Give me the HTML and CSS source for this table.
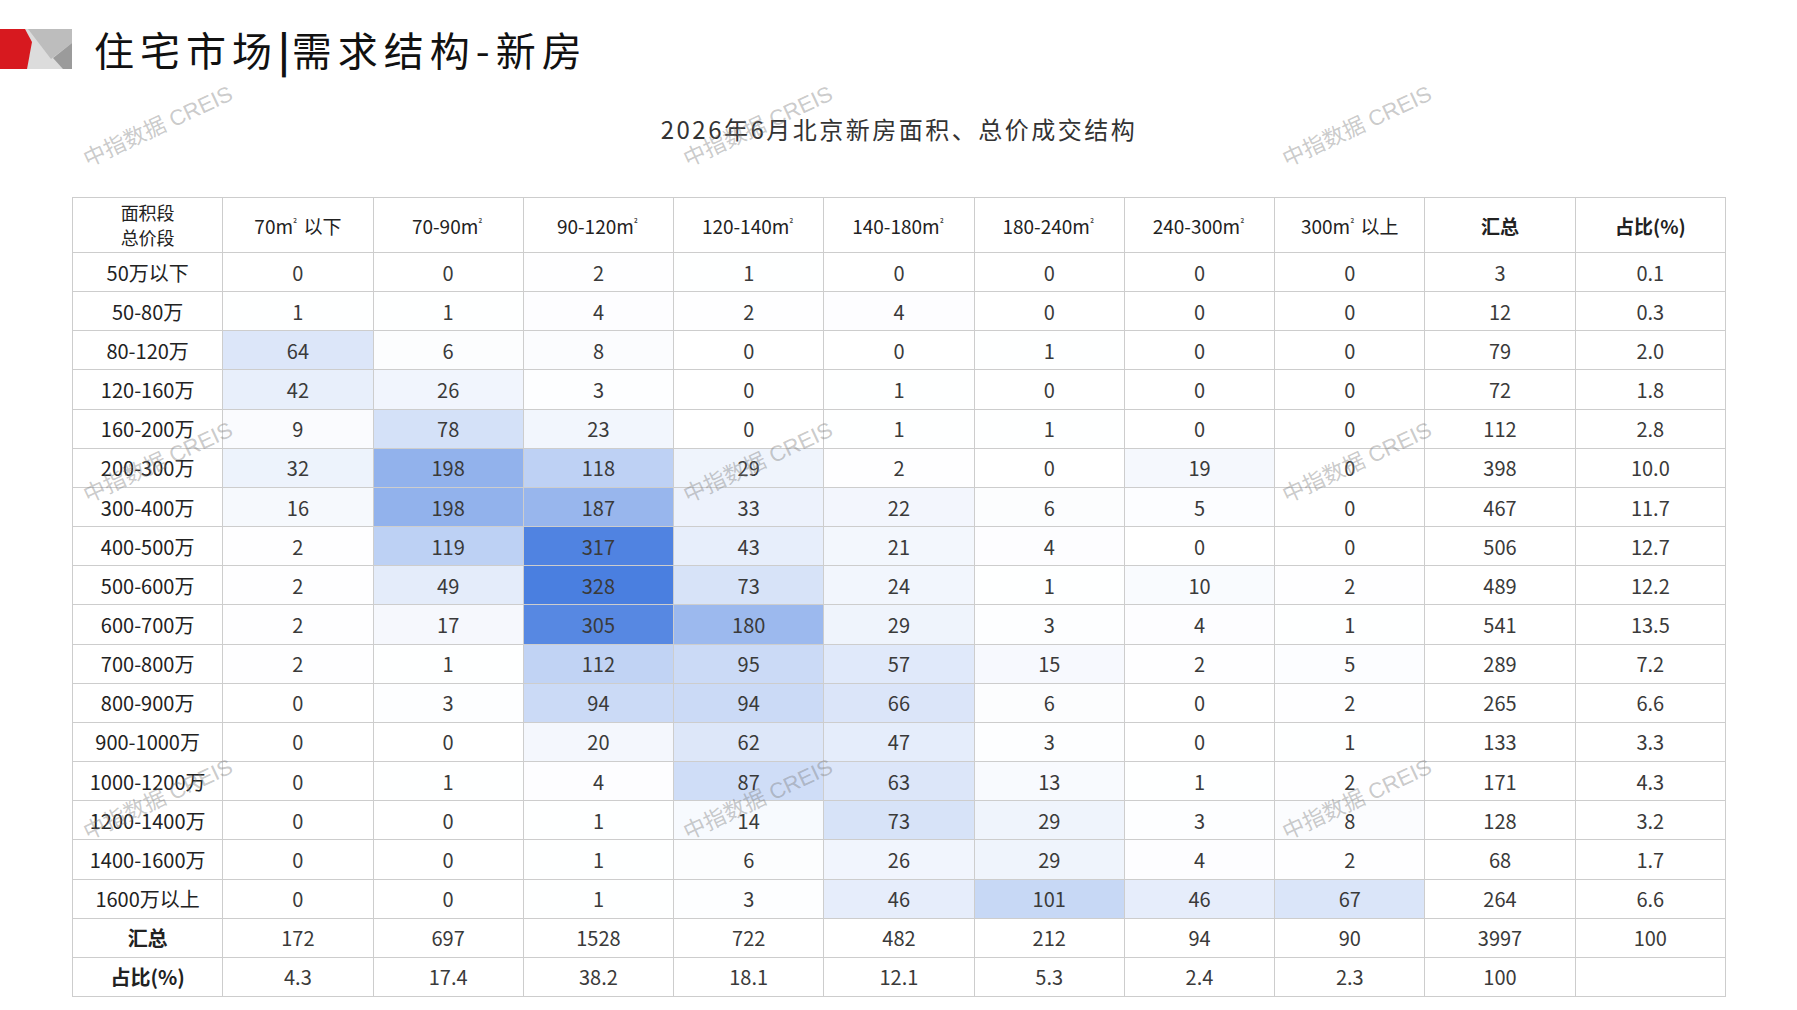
FILE: index.html
```html
<!DOCTYPE html>
<html lang="zh-CN">
<head>
<meta charset="utf-8">
<title>住宅市场|需求结构-新房</title>
<link rel="stylesheet" href="styles.css">
</head>
<body>
<div class="page">
  <header class="header">
    <svg class="logo" viewBox="0 0 72 40" xmlns="http://www.w3.org/2000/svg">
      <polygon points="22,0 72,0 72,40 20,40" fill="#dcdcdc"/>
      <polygon points="28,0 72,0 72,14 51,30" fill="#bdbdbd"/>
      <polygon points="72,14 53,29 63,40 72,40" fill="#9b9b9b"/>
      <polygon points="0,0 25,0 32,13 27,40 0,40" fill="#d7191f"/>
    </svg>
    <h1 class="title">住宅市场<span class="bar">|</span>需求结构-新房</h1>
  </header>

  <h2 class="subtitle">2026年6月北京新房面积、总价成交结构</h2>

  <table class="grid" id="grid">
    <thead>
      <tr>
        <th class="corner"><span class="cl">面积段</span><span class="cl">总价段</span></th>
        <th>70m<span class="sq">²</span> 以下</th>
        <th>70-90m<span class="sq">²</span></th>
        <th>90-120m<span class="sq">²</span></th>
        <th>120-140m<span class="sq">²</span></th>
        <th>140-180m<span class="sq">²</span></th>
        <th>180-240m<span class="sq">²</span></th>
        <th>240-300m<span class="sq">²</span></th>
        <th>300m<span class="sq">²</span> 以上</th>
        <th class="kai">汇总</th>
        <th class="kai">占比(%)</th>
      </tr>
    </thead>
    <tbody>
      <tr class="data"><td class="lbl">50万以下</td><td>0</td><td>0</td><td>2</td><td>1</td><td>0</td><td>0</td><td>0</td><td>0</td><td>3</td><td>0.1</td></tr>
      <tr class="data"><td class="lbl">50-80万</td><td>1</td><td>1</td><td>4</td><td>2</td><td>4</td><td>0</td><td>0</td><td>0</td><td>12</td><td>0.3</td></tr>
      <tr class="data"><td class="lbl">80-120万</td><td>64</td><td>6</td><td>8</td><td>0</td><td>0</td><td>1</td><td>0</td><td>0</td><td>79</td><td>2.0</td></tr>
      <tr class="data"><td class="lbl">120-160万</td><td>42</td><td>26</td><td>3</td><td>0</td><td>1</td><td>0</td><td>0</td><td>0</td><td>72</td><td>1.8</td></tr>
      <tr class="data"><td class="lbl">160-200万</td><td>9</td><td>78</td><td>23</td><td>0</td><td>1</td><td>1</td><td>0</td><td>0</td><td>112</td><td>2.8</td></tr>
      <tr class="data"><td class="lbl">200-300万</td><td>32</td><td>198</td><td>118</td><td>29</td><td>2</td><td>0</td><td>19</td><td>0</td><td>398</td><td>10.0</td></tr>
      <tr class="data"><td class="lbl">300-400万</td><td>16</td><td>198</td><td>187</td><td>33</td><td>22</td><td>6</td><td>5</td><td>0</td><td>467</td><td>11.7</td></tr>
      <tr class="data"><td class="lbl">400-500万</td><td>2</td><td>119</td><td>317</td><td>43</td><td>21</td><td>4</td><td>0</td><td>0</td><td>506</td><td>12.7</td></tr>
      <tr class="data"><td class="lbl">500-600万</td><td>2</td><td>49</td><td>328</td><td>73</td><td>24</td><td>1</td><td>10</td><td>2</td><td>489</td><td>12.2</td></tr>
      <tr class="data"><td class="lbl">600-700万</td><td>2</td><td>17</td><td>305</td><td>180</td><td>29</td><td>3</td><td>4</td><td>1</td><td>541</td><td>13.5</td></tr>
      <tr class="data"><td class="lbl">700-800万</td><td>2</td><td>1</td><td>112</td><td>95</td><td>57</td><td>15</td><td>2</td><td>5</td><td>289</td><td>7.2</td></tr>
      <tr class="data"><td class="lbl">800-900万</td><td>0</td><td>3</td><td>94</td><td>94</td><td>66</td><td>6</td><td>0</td><td>2</td><td>265</td><td>6.6</td></tr>
      <tr class="data"><td class="lbl">900-1000万</td><td>0</td><td>0</td><td>20</td><td>62</td><td>47</td><td>3</td><td>0</td><td>1</td><td>133</td><td>3.3</td></tr>
      <tr class="data"><td class="lbl">1000-1200万</td><td>0</td><td>1</td><td>4</td><td>87</td><td>63</td><td>13</td><td>1</td><td>2</td><td>171</td><td>4.3</td></tr>
      <tr class="data"><td class="lbl">1200-1400万</td><td>0</td><td>0</td><td>1</td><td>14</td><td>73</td><td>29</td><td>3</td><td>8</td><td>128</td><td>3.2</td></tr>
      <tr class="data"><td class="lbl">1400-1600万</td><td>0</td><td>0</td><td>1</td><td>6</td><td>26</td><td>29</td><td>4</td><td>2</td><td>68</td><td>1.7</td></tr>
      <tr class="data"><td class="lbl">1600万以上</td><td>0</td><td>0</td><td>1</td><td>3</td><td>46</td><td>101</td><td>46</td><td>67</td><td>264</td><td>6.6</td></tr>
      <tr class="total"><td class="lbl kai">汇总</td><td>172</td><td>697</td><td>1528</td><td>722</td><td>482</td><td>212</td><td>94</td><td>90</td><td>3997</td><td>100</td></tr>
      <tr class="total"><td class="lbl kai">占比(%)</td><td>4.3</td><td>17.4</td><td>38.2</td><td>18.1</td><td>12.1</td><td>5.3</td><td>2.4</td><td>2.3</td><td>100</td><td></td></tr>
    </tbody>
  </table>

  <div class="wm" style="left:157px;top:124px">中指数据 CREIS</div>
  <div class="wm" style="left:757px;top:124px">中指数据 CREIS</div>
  <div class="wm" style="left:1356px;top:124px">中指数据 CREIS</div>
  <div class="wm" style="left:157px;top:460px">中指数据 CREIS</div>
  <div class="wm" style="left:757px;top:460px">中指数据 CREIS</div>
  <div class="wm" style="left:1356px;top:460px">中指数据 CREIS</div>
  <div class="wm" style="left:157px;top:797px">中指数据 CREIS</div>
  <div class="wm" style="left:757px;top:797px">中指数据 CREIS</div>
  <div class="wm" style="left:1356px;top:797px">中指数据 CREIS</div>
</div>
<script src="script.js"></script>
</body>
</html>
```

FILE: styles.css
```css
* { box-sizing: border-box; }
html, body { margin: 0; padding: 0; background: #ffffff; }
body {
  font-family: "Noto Sans CJK SC", "Noto Sans", sans-serif;
  color: #333333;
}
.page {
  position: relative;
  width: 1797px;
  height: 1010px;
  overflow: hidden;
  background: #ffffff;
}
.header {
  display: flex;
  align-items: center;
  gap: 22px;
  padding-top: 29px;
  height: 69px;
}
.logo {
  width: 72px;
  height: 40px;
  flex: none;
  display: block;
}
.title {
  margin: 0;
  font-size: 40px;
  line-height: 40px;
  font-weight: 400;
  letter-spacing: 6px;
  color: #111111;
}
.title .bar {
  font-weight: 700;
  letter-spacing: 2px;
}
.subtitle {
  margin: 45px 0 0 72px;
  width: 1654px;
  text-align: center;
  font-size: 24px;
  line-height: 30px;
  font-weight: 400;
  letter-spacing: 2.5px;
  color: #333333;
}
.grid {
  margin: 53px 0 0 72px;
  width: 1654px;
  border-collapse: collapse;
  table-layout: fixed;
}
.grid th,
.grid td {
  border: 1px solid #cdcdcd;
  padding: 0;
  text-align: center;
  vertical-align: middle;
  font-size: 20px;
  font-weight: 400;
  color: #3a3a3a;
  white-space: nowrap;
}
.grid thead tr { height: 55px; }
.grid tbody tr { height: 39.16px; }
.grid th { color: #222222; font-size: 19px; }
.grid th .sq {
  font-size: 10px;
  vertical-align: 7px;
  margin-right: 2px;
}
.grid .corner { font-size: 18px; line-height: 25px; }
.grid .corner .cl { display: block; height: 25px; }
.grid .kai { font-weight: 700; color: #222222; }
.grid .lbl { color: #222222; }
.wm {
  position: absolute;
  transform: translate(-50%, -50%) rotate(-25deg);
  font-family: "Liberation Sans", "Noto Sans CJK SC", sans-serif;
  font-size: 22px;
  color: rgba(120, 120, 120, 0.4);
  white-space: nowrap;
  pointer-events: none;
}
```

FILE: script.js
```javascript
(function () {
  var max = 328;
  var lo = [255, 255, 255];
  var hi = [74, 127, 224];
  var rows = document.querySelectorAll('#grid tbody tr.data');
  rows.forEach(function (tr) {
    var cells = tr.children;
    for (var i = 1; i <= 8; i++) {
      var v = parseFloat(cells[i].textContent);
      if (!v) continue;
      var t = Math.min(v / max, 1);
      var c = lo.map(function (l, k) { return Math.round(l + (hi[k] - l) * t); });
      cells[i].style.backgroundColor = 'rgb(' + c.join(',') + ')';
    }
  });
})();
```
